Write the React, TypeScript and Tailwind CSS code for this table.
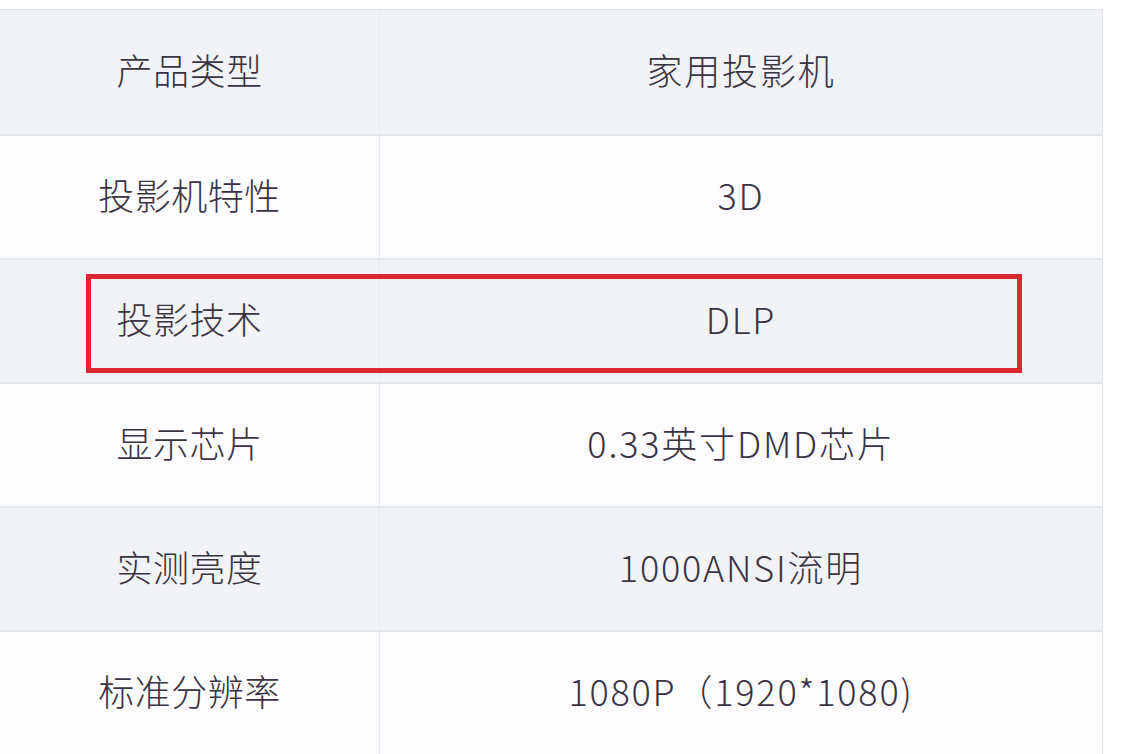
import React from "react";

const rows: [string, string][] = [
  ["产品类型", "家用投影机"],
  ["投影机特性", "3D"],
  ["投影技术", "DLP"],
  ["显示芯片", "0.33英寸DMD芯片"],
  ["实测亮度", "1000ANSI流明"],
  ["标准分辨率", "1080P（1920*1080)"],
];

export default function App() {
  return (
    <div
      className="relative w-[1124px] h-[754px] bg-white overflow-hidden pt-[9px]"
      style={{ fontFamily: '"Noto Sans CJK SC", "Noto Sans", sans-serif' }}
    >
      <div className="w-[1103px] border-t border-b border-r border-[#e2e5ea]">
        {rows.map(([k, v], i) => (
          <div
            key={k}
            className={`flex h-[124px] ${i > 0 ? "border-t-2 border-[#e4e7ec]" : ""} ${
              i % 2 === 0 ? "bg-[#f2f3f6]" : "bg-[#fdfdff]"
            }`}
          >
            <div className="w-[380px] flex items-center justify-center pb-[6px] border-r border-[#e6e9ee] text-[36px] font-light text-[#3a3343] tracking-[0.5px]">
              {k}
            </div>
            <div className="flex-1 flex items-center justify-center pb-[6px] text-[36px] font-light text-[#3a3343] tracking-[1.8px]">
              {v}
            </div>
          </div>
        ))}
      </div>
      <div className="absolute left-[86px] top-[274px] w-[936px] h-[99px] border-[5px] border-[#dc2630]" />
    </div>
  );
}
